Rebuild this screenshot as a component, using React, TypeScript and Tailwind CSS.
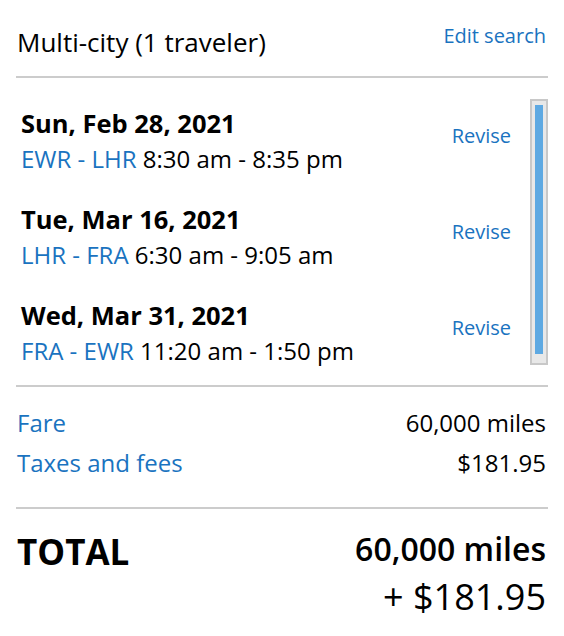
import React from "react";

const blue = "text-[#1a73c0]";

const legs = [
  { date: "Sun, Feb 28, 2021", route: "EWR - LHR", time: "8:30 am - 8:35 pm" },
  { date: "Tue, Mar 16, 2021", route: "LHR - FRA", time: "6:30 am - 9:05 am" },
  { date: "Wed, Mar 31, 2021", route: "FRA - EWR", time: "11:20 am - 1:50 pm" },
];

export default function App() {
  return (
    <div className="w-[564px] h-[636px] bg-white text-black font-['Open_Sans',sans-serif]">
      <div className="mx-[16px]">
        <div className="flex justify-between items-start pt-[22px] pb-[17px] border-b-2 border-[#cccccc]">
          <div className="text-[26px] leading-[34px] mt-[3px] pl-[1px]">Multi-city (1 traveler)</div>
          <div className={`text-[20px] leading-[28px] pr-[2px] ${blue}`}>Edit search</div>
        </div>

        <div className="flex pb-[18px] border-b-2 border-[#cccccc]">
          <div className="flex-1 flex flex-col gap-[27px] pt-[28px] pl-[5px] pr-[19px]">
            {legs.map((l) => (
              <div key={l.date} className="flex justify-between items-start">
                <div className="flex flex-col gap-[3px]">
                  <div className="text-[25.5px] leading-[34px] font-bold">{l.date}</div>
                  <div className="text-[24px] leading-[32px]">
                    <span className={blue}>{l.route}</span> {l.time}
                  </div>
                </div>
                <div className={`text-[20px] leading-[28px] mt-[16px] ${blue}`}>Revise</div>
              </div>
            ))}
          </div>
          <div className="w-[18px] h-[266px] mt-[21px] border-2 border-[#c8c8c8] bg-[#e8e8e8] pt-[4px] px-[3px]">
            <div className="w-[8px] h-[249px] bg-[#5ea9e2]" />
          </div>
        </div>

        <div className="flex flex-col gap-[8px] pt-[20px] pb-[28px] border-b-2 border-[#cccccc]">
          <div className="flex justify-between text-[24px] leading-[32px]">
            <span className={`${blue} pl-[1px]`}>Fare</span>
            <span className="pr-[2px]">60,000 miles</span>
          </div>
          <div className="flex justify-between text-[24px] leading-[32px]">
            <span className={`${blue} pl-[1px]`}>Taxes and fees</span>
            <span className="pr-[2px]">$181.95</span>
          </div>
        </div>

        <div className="flex justify-between items-start pt-[20px]">
          <div className="text-[35px] leading-[40px] font-bold mt-[3px] pl-[1px]">TOTAL</div>
          <div className="flex flex-col items-end gap-[6px] pr-[2px]">
            <div className="text-[32px] leading-[40px] font-semibold">60,000 miles</div>
            <div className="text-[36px] leading-[44px]">+ $181.95</div>
          </div>
        </div>
      </div>
    </div>
  );
}
